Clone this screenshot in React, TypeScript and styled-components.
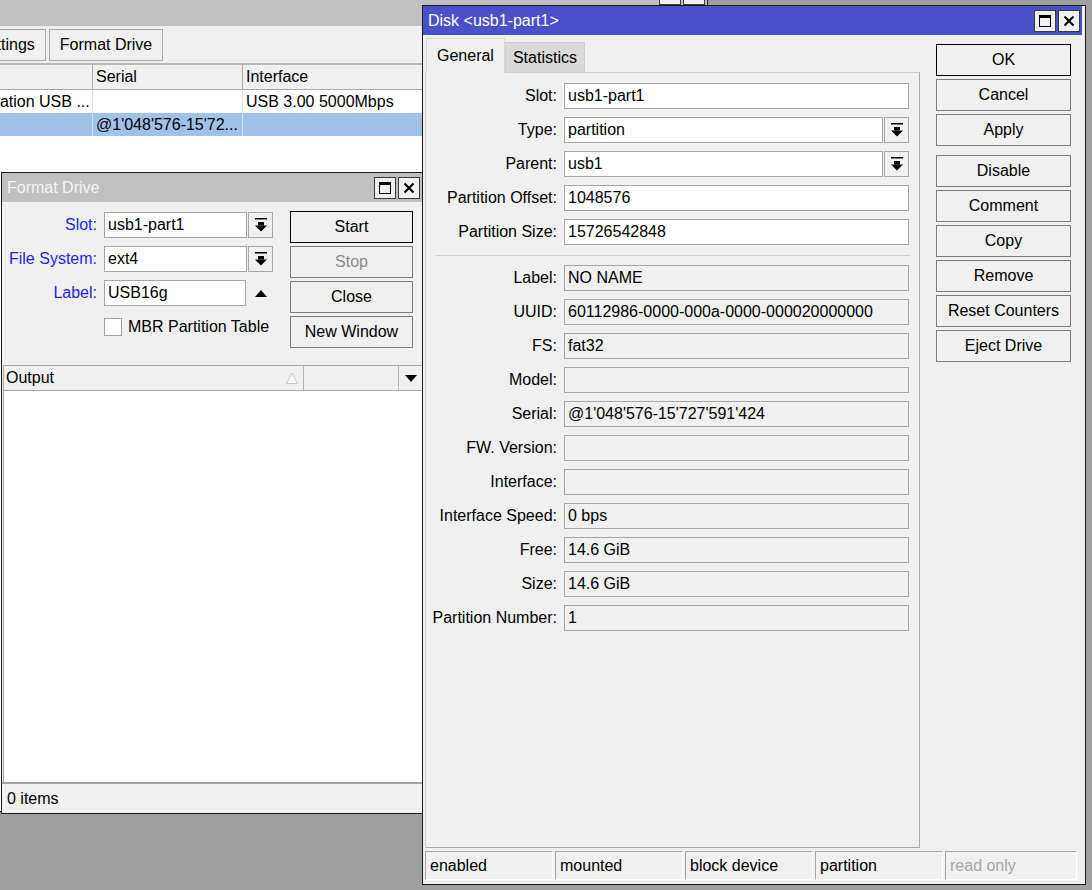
import React from "react";
import styled, { createGlobalStyle } from "styled-components";

const GlobalStyle = createGlobalStyle`
  html, body {
    margin: 0;
    padding: 0;
  }
  body {
    font-family: "Liberation Sans", Arial, sans-serif;
    font-size: 16px;
    color: #000;
  }
  * {
    box-sizing: border-box;
  }
`;

// icons
function DropIcon() {
  return (
    <svg width="12" height="14" viewBox="0 0 12 14">
      <rect x="0" y="0" width="12" height="1.5" fill="#000" />
      <rect x="3" y="4" width="6" height="3.5" fill="#000" />
      <path d="M0 7.5 H12 L6 13.5 Z" fill="#000" />
    </svg>
  );
}

function MaxIcon() {
  return (
    <svg width="14" height="14" viewBox="0 0 14 14">
      <rect x="1.5" y="1.5" width="11" height="11" fill="none" stroke="#000" strokeWidth="1" />
      <rect x="1" y="1" width="12" height="3" fill="#000" />
    </svg>
  );
}

function CloseIcon() {
  return (
    <svg width="12" height="12" viewBox="0 0 12 12">
      <path d="M1.5 1.5 L10.5 10.5 M10.5 1.5 L1.5 10.5" stroke="#000" strokeWidth="2" />
    </svg>
  );
}

function UpTriangle() {
  return (
    <svg width="12" height="7" viewBox="0 0 12 7">
      <path d="M0 7 H12 L6 0 Z" fill="#000" />
    </svg>
  );
}

function DownTriangle() {
  return (
    <svg width="12" height="7" viewBox="0 0 12 7">
      <path d="M0 0 H12 L6 7 Z" fill="#000" />
    </svg>
  );
}

function SortIcon() {
  return (
    <svg width="12" height="12" viewBox="0 0 12 12">
      <path d="M6 1 L11.5 11.5 H0.5 Z" fill="#fafafa" stroke="#c8c8c8" strokeWidth="1" />
    </svg>
  );
}

const diskEditable = [
  { label: "Slot", value: "usb1-part1", drop: false },
  { label: "Type", value: "partition", drop: true },
  { label: "Parent", value: "usb1", drop: true },
  { label: "Partition Offset", value: "1048576", drop: false },
  { label: "Partition Size", value: "15726542848", drop: false },
];

const diskInfo = [
  ["Label", "NO NAME"],
  ["UUID", "60112986-0000-000a-0000-000020000000"],
  ["FS", "fat32"],
  ["Model", ""],
  ["Serial", "@1'048'576-15'727'591'424"],
  ["FW. Version", ""],
  ["Interface", ""],
  ["Interface Speed", "0 bps"],
  ["Free", "14.6 GiB"],
  ["Size", "14.6 GiB"],
  ["Partition Number", "1"],
];

const sideButtons = [
  { text: "OK", focus: true, gap: false },
  { text: "Cancel", focus: false, gap: false },
  { text: "Apply", focus: false, gap: false },
  { text: "Disable", focus: false, gap: true },
  { text: "Comment", focus: false, gap: false },
  { text: "Copy", focus: false, gap: false },
  { text: "Remove", focus: false, gap: false },
  { text: "Reset Counters", focus: false, gap: false },
  { text: "Eject Drive", focus: false, gap: false },
];

const statusCells = [
  { text: "enabled", dim: false },
  { text: "mounted", dim: false },
  { text: "block device", dim: false },
  { text: "partition", dim: false },
  { text: "read only", dim: true },
];

function WinControls() {
  return (
    <Controls>
      <TitleButton>
        <MaxIcon />
      </TitleButton>
      <TitleButton>
        <CloseIcon />
      </TitleButton>
    </Controls>
  );
}

function ListWin() {
  return (
    <ListWindow>
      <TitleBar $height={47} $top>
        <TitleText />
        <WinControls />
      </TitleBar>
      <Toolbar>
        <ToolButton>Settings</ToolButton>
        <ToolButton>Format Drive</ToolButton>
      </Toolbar>
      <ListTable>
        <ListHead>
          <ListHeadCell $w={152} $pad={10}>Model</ListHeadCell>
          <ListHeadCell $w={150}>Serial</ListHeadCell>
          <ListHeadCell>Interface</ListHeadCell>
        </ListHead>
        <ListRow>
          <ListCell $w={152} $pad={10}>Corporation USB ...</ListCell>
          <ListCell $w={150}></ListCell>
          <ListCell>USB 3.00 5000Mbps</ListCell>
        </ListRow>
        <ListRow $selected>
          <ListCell $w={152} $pad={10}></ListCell>
          <ListCell $w={150}>@1'048'576-15'72...</ListCell>
          <ListCell></ListCell>
        </ListRow>
      </ListTable>
    </ListWindow>
  );
}

function FormatWin() {
  return (
    <FormatWindow>
      <TitleBar $height={29}>
        <TitleText>Format Drive</TitleText>
        <WinControls />
      </TitleBar>
      <FormatTop>
        <FormatFields>
          <FormatRow>
            <FormLabel>Slot:</FormLabel>
            <TextBox $w={143}>usb1-part1</TextBox>
            <DropButton>
              <DropIcon />
            </DropButton>
          </FormatRow>
          <FormatRow>
            <FormLabel>File System:</FormLabel>
            <TextBox $w={143}>ext4</TextBox>
            <DropButton>
              <DropIcon />
            </DropButton>
          </FormatRow>
          <FormatRow>
            <FormLabel>Label:</FormLabel>
            <TextBox $w={142}>USB16g</TextBox>
            <ArrowSlot>
              <UpTriangle />
            </ArrowSlot>
          </FormatRow>
          <FormatRow>
            <LabelSpacer />
            <CheckBox />
            <CheckText>MBR Partition Table</CheckText>
          </FormatRow>
        </FormatFields>
        <FormatButtons>
          <WinButton $focus>Start</WinButton>
          <WinButton $disabled>Stop</WinButton>
          <WinButton>Close</WinButton>
          <WinButton>New Window</WinButton>
        </FormatButtons>
      </FormatTop>
      <OutputTable>
        <OutputHead>
          <OutputCol>
            <span>Output</span>
            <SortIcon />
          </OutputCol>
          <BlankCol />
          <MenuCol>
            <DownTriangle />
          </MenuCol>
        </OutputHead>
        <OutputBody />
      </OutputTable>
      <ItemsBar>0 items</ItemsBar>
    </FormatWindow>
  );
}

function DiskWin() {
  return (
    <DiskWindow>
      <TitleBar $height={29} $active>
        <TitleText>Disk &lt;usb1-part1&gt;</TitleText>
        <WinControls />
      </TitleBar>
      <DiskMain>
        <TabArea>
          <Tabs>
            <Tab $active>General</Tab>
            <Tab>Statistics</Tab>
          </Tabs>
          <TabPanel>
            {diskEditable.map((f) => (
              <FieldRow key={f.label}>
                <FieldLabel>{f.label}:</FieldLabel>
                <TextBox $w={f.drop ? 319 : 345}>{f.value}</TextBox>
                {f.drop && (
                  <DropButton>
                    <DropIcon />
                  </DropButton>
                )}
              </FieldRow>
            ))}
            <Separator />
            {diskInfo.map(([label, value]) => (
              <FieldRow key={label}>
                <FieldLabel>{label}:</FieldLabel>
                <TextBox $w={345} $readOnly>
                  {value}
                </TextBox>
              </FieldRow>
            ))}
          </TabPanel>
        </TabArea>
        <SideButtons>
          {sideButtons.map((b) => (
            <WinButton key={b.text} $focus={b.focus} $gap={b.gap}>
              {b.text}
            </WinButton>
          ))}
        </SideButtons>
      </DiskMain>
      <StatusBar>
        {statusCells.map((c) => (
          <StatusCell key={c.text} $dim={c.dim}>
            {c.text}
          </StatusCell>
        ))}
      </StatusBar>
    </DiskWindow>
  );
}

export default function App() {
  return (
    <>
      <GlobalStyle />
      <Desktop>
        <ListWin />
        <FormatWin />
        <DiskWin />
      </Desktop>
    </>
  );
}

const Desktop = styled.div`
  position: relative;
  width: 1092px;
  height: 890px;
  overflow: hidden;
  background: #a0a0a0;
`;

const Window = styled.div`
  position: absolute;
  display: flex;
  flex-direction: column;
  background: #f0f0f0;
  border: 1px solid #1a1a1a;
`;

const ListWindow = styled(Window)`
  left: -60px;
  top: -22px;
  width: 768px;
  height: 834px;
`;

const FormatWindow = styled(Window)`
  left: 1px;
  top: 172px;
  width: 422px;
  height: 642px;
`;

const DiskWindow = styled(Window)`
  left: 422px;
  top: 5px;
  width: 664px;
  height: 880px;
  padding-right: 3px;
`;

const TitleBar = styled.div<{ $height: number; $active?: boolean; $top?: boolean }>`
  flex: none;
  display: flex;
  align-items: ${(p) => (p.$top ? "flex-start" : "center")};
  height: ${(p) => p.$height}px;
  padding: ${(p) => (p.$top ? "4px" : "0")} 2px 0 5px;
  background: ${(p) => (p.$active ? "#4a50c8" : "#c0c0c0")};
  color: ${(p) => (p.$active ? "#ffffff" : "#f4f4f4")};
`;

const TitleText = styled.div`
  flex: 1;
  white-space: nowrap;
`;

const Controls = styled.div`
  display: flex;
  gap: 2px;
`;

const TitleButton = styled.div`
  width: 22px;
  height: 22px;
  display: flex;
  align-items: center;
  justify-content: center;
  background: #f0f0f0;
  border: 1px solid #3a3a3a;
`;

const Toolbar = styled.div`
  flex: none;
  display: flex;
  align-items: center;
  gap: 3px;
  height: 39px;
  padding-left: 25px;
  border-bottom: 2px solid #b8b8b8;
`;

const ToolButton = styled.div`
  height: 32px;
  display: flex;
  align-items: center;
  padding: 0 10px;
  border: 1px solid #a8a8a8;
  background: #f0f0f0;
  white-space: nowrap;
`;

const ListTable = styled.div`
  flex: 1;
  background: #fff;
`;

const ListHead = styled.div`
  display: flex;
  height: 25px;
  background: #f0f0f0;
  border-bottom: 1px solid #a8a8a8;
`;

const ListHeadCell = styled.div<{ $w?: number; $pad?: number }>`
  flex: ${(p) => (p.$w ? "none" : "1")};
  width: ${(p) => (p.$w ? `${p.$w}px` : "auto")};
  display: flex;
  align-items: center;
  padding-left: ${(p) => p.$pad ?? 3}px;
  border-right: 1px solid #a8a8a8;
  white-space: nowrap;
  overflow: hidden;
`;

const ListRow = styled.div<{ $selected?: boolean }>`
  display: flex;
  height: 23px;
  background: ${(p) => (p.$selected ? "#a0c2ea" : "#ffffff")};

  & > div {
    border-right: 1px solid ${(p) => (p.$selected ? "#d0dff3" : "#e2e2e2")};
  }
`;

const ListCell = styled.div<{ $w?: number; $pad?: number }>`
  flex: ${(p) => (p.$w ? "none" : "1")};
  width: ${(p) => (p.$w ? `${p.$w}px` : "auto")};
  display: flex;
  align-items: center;
  padding-left: ${(p) => p.$pad ?? 3}px;
  white-space: nowrap;
  overflow: hidden;
`;

const FormatTop = styled.div`
  flex: none;
  display: flex;
  height: 163px;
  padding-top: 9px;
`;

const FormatFields = styled.div`
  display: flex;
  flex-direction: column;
  gap: 8px;
  padding-top: 1px;
`;

const FormatRow = styled.div`
  display: flex;
  align-items: center;
  height: 26px;
`;

const FormLabel = styled.div`
  flex: none;
  width: 95px;
  margin-right: 7px;
  text-align: right;
  color: #1f1fe6;
  white-space: nowrap;
`;

const LabelSpacer = styled.div`
  flex: none;
  width: 102px;
`;

const TextBox = styled.div<{ $w: number; $readOnly?: boolean }>`
  flex: none;
  width: ${(p) => p.$w}px;
  height: 26px;
  display: flex;
  align-items: center;
  padding-left: 3px;
  background: ${(p) => (p.$readOnly ? "#f0f0f0" : "#ffffff")};
  border: 1px solid #a6a6a6;
  white-space: nowrap;
  overflow: hidden;
`;

const DropButton = styled.div`
  flex: none;
  width: 25px;
  height: 26px;
  margin-left: 1px;
  display: flex;
  align-items: center;
  justify-content: center;
  background: #f0f0f0;
  border: 1px solid #a6a6a6;
`;

const ArrowSlot = styled.div`
  flex: none;
  width: 25px;
  height: 26px;
  margin-left: 2px;
  display: flex;
  align-items: center;
  justify-content: center;
`;

const CheckBox = styled.div`
  flex: none;
  width: 18px;
  height: 18px;
  background: #fff;
  border: 1px solid #a0a0a0;
`;

const CheckText = styled.div`
  margin-left: 6px;
  white-space: nowrap;
`;

const FormatButtons = styled.div`
  display: flex;
  flex-direction: column;
  gap: 3px;
  margin-left: 17px;
`;

const WinButton = styled.div<{ $focus?: boolean; $disabled?: boolean; $gap?: boolean }>`
  flex: none;
  width: 123px;
  height: 32px;
  display: flex;
  align-items: center;
  justify-content: center;
  margin-top: ${(p) => (p.$gap ? "6px" : "0")};
  background: #f0f0f0;
  border: 1px solid ${(p) => (p.$focus ? "#000000" : "#7c7c7c")};
  color: ${(p) => (p.$disabled ? "#8a8a8a" : "#000000")};
  white-space: nowrap;
`;

const OutputTable = styled.div`
  flex: 1;
  display: flex;
  flex-direction: column;
  margin-left: 1px;
  border-top: 1px solid #a6a6a6;
  border-left: 1px solid #a6a6a6;
`;

const OutputHead = styled.div`
  flex: none;
  display: flex;
  height: 25px;
  background: #f0f0f0;
  border-bottom: 1px solid #a6a6a6;
`;

const OutputCol = styled.div`
  flex: none;
  width: 300px;
  display: flex;
  align-items: center;
  justify-content: space-between;
  padding: 0 5px 0 2px;
  border-right: 1px solid #b4b4b4;
`;

const BlankCol = styled.div`
  flex: none;
  width: 95px;
  border-right: 1px solid #b4b4b4;
`;

const MenuCol = styled.div`
  flex: 1;
  display: flex;
  align-items: center;
  justify-content: center;
`;

const OutputBody = styled.div`
  flex: 1;
  background: #fff;
`;

const ItemsBar = styled.div`
  flex: none;
  height: 31px;
  display: flex;
  align-items: center;
  padding-left: 5px;
  border-top: 2px solid #a6a6a6;
`;

const DiskMain = styled.div`
  flex: 1;
  display: flex;
  padding: 3px 0 0 2px;
`;

const TabArea = styled.div`
  flex: none;
  width: 495px;
  display: flex;
  flex-direction: column;
`;

const Tabs = styled.div`
  flex: none;
  display: flex;
  align-items: flex-end;
  height: 34px;
  padding-left: 1px;
`;

const Tab = styled.div<{ $active?: boolean }>`
  position: relative;
  z-index: ${(p) => (p.$active ? 1 : 0)};
  height: ${(p) => (p.$active ? "35px" : "30px")};
  margin-bottom: ${(p) => (p.$active ? "-1px" : "0")};
  padding: 0 ${(p) => (p.$active ? "10px" : "7px")};
  display: flex;
  align-items: center;
  background: ${(p) => (p.$active ? "#f0f0f0" : "#d9d9d9")};
  border: 1px solid ${(p) => (p.$active ? "#d9d9d9" : "#cdcdcd")};
  border-bottom: none;
  white-space: nowrap;
`;

const TabPanel = styled.div`
  flex: 1;
  display: flex;
  flex-direction: column;
  padding: 10px 9px 0 0;
  border: 1px solid #cfcfcf;
  border-right-color: #a8a8a8;
  border-bottom-color: #a8a8a8;
`;

const FieldRow = styled.div`
  flex: none;
  display: flex;
  align-items: center;
  height: 26px;
  margin-bottom: 8px;
`;

const FieldLabel = styled.div`
  flex: none;
  width: 131px;
  margin-right: 7px;
  text-align: right;
  white-space: nowrap;
`;

const Separator = styled.div`
  flex: none;
  height: 1px;
  margin: 2px 0 9px 10px;
  background: #d0d0d0;
`;

const SideButtons = styled.div`
  display: flex;
  flex-direction: column;
  gap: 3px;
  margin-left: 16px;
  padding-top: 6px;

  & > div {
    width: 135px;
  }
`;

const StatusBar = styled.div`
  flex: none;
  display: flex;
  gap: 2px;
  padding: 3px 0 4px 2px;
`;

const StatusCell = styled.div<{ $dim?: boolean }>`
  width: 128px;
  height: 29px;
  display: flex;
  align-items: center;
  padding-left: 4px;
  border: 1px solid;
  border-color: #a6a6a6 #ffffff #ffffff #a6a6a6;
  color: ${(p) => (p.$dim ? "#a6a6a6" : "#000000")};
  white-space: nowrap;

  &:last-child {
    width: 132px;
  }
`;
